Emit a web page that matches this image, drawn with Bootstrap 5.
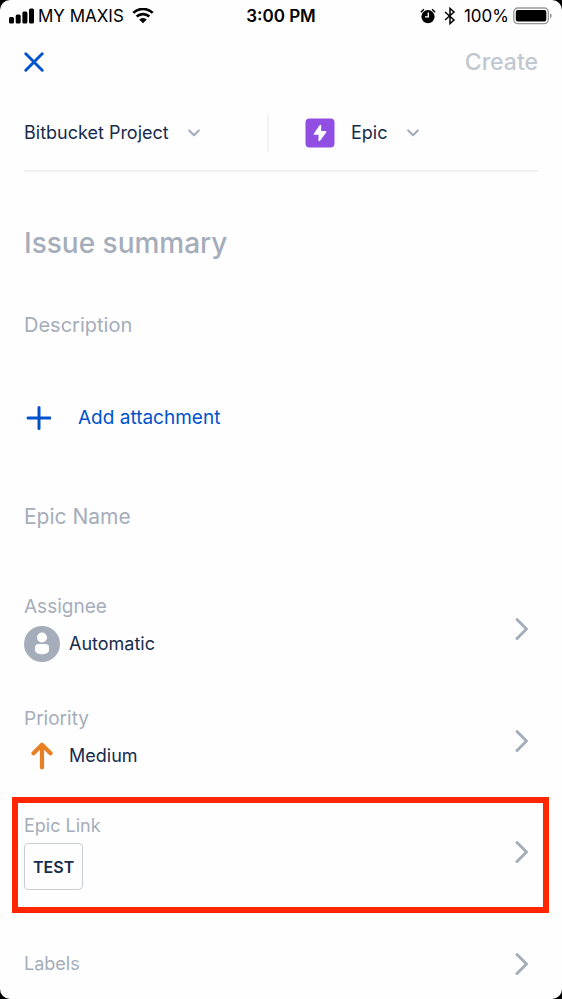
<!DOCTYPE html>
<html lang="en">
<head>
<meta charset="utf-8">
<meta name="viewport" content="width=device-width, initial-scale=1">
<title>Create issue</title>
<link href="https://cdn.jsdelivr.net/npm/bootstrap@5.3.0/dist/css/bootstrap.min.css" rel="stylesheet">
<style>
  :root { --ink: #172b4d; --muted-ink: #a5adba; --brand: #0052cc; --hairline: #f1f2f4; }
  body { background: #000; color: var(--ink); font-family: Inter, "Liberation Sans", sans-serif; font-size: 18px; line-height: 24px; }
  svg { display: block; flex: none; }
  .screen { background: #fefefe; border-radius: 10px; overflow: hidden; }
  .status-bar { height: 31px; padding: 0 9px; color: #000; font-size: 17px; }
  .side { flex: 1 1 0; }
  .clock { font-weight: 600; }
  .gutter { padding-left: 24px; padding-right: 24px; }
  .title-bar { height: 62px; }
  .plain { border: 0; background: none; padding: 0; color: inherit; text-align: left; }
  .create-btn { font-size: 23px; font-weight: 500; color: #c1c7d0; }
  .pickers { height: 79px; padding-top: 3px; border-bottom: 2px solid var(--hairline); }
  .project { flex: 0 0 245px; height: 38px; border-right: 2px solid var(--hairline); }
  .kind { padding-left: 36px; }
  .picker { appearance: none; }
  .picker-gap { margin-left: 18px; }
  .field { display: block; width: 100%; border: 0; background: none; padding: 0; color: var(--ink); font-size: 20px; resize: none; outline-offset: 4px; }
  .field::placeholder { color: var(--muted-ink); opacity: 1; }
  .field-summary { height: 36px; font-size: 28px; font-weight: 500; }
  .field-line { height: 28px; line-height: 28px; }
  .fields { padding-top: 53px; }
  .after-summary { margin-top: 50px; }
  .after-description { margin-top: 67px; }
  .attach { color: var(--brand); gap: 27px; height: 24px; font-size: 19px; }
  .after-attach { margin-top: 73px; font-size: 21px; }
  .rows { padding-top: 42px; }
  .row-btn { width: 100%; padding: 22px 33px 23px 24px; }
  .caption-text { color: var(--muted-ink); }
  .caption-large { font-size: 19px; }
  .value { margin-top: 7px; gap: 9px; height: 36px; }
  .marked { margin: 0 13px 0 12px; border: 6px solid #ff2600; }
  .marked .row-btn { padding: 11px 14px 17px 6px; }
  .chip { margin-top: 5px; height: 47px; padding: 0 8px; border: 1px solid #c8cdd5; border-radius: 4px; font-size: 16px; font-weight: 600; }
  .row-last { padding-top: 39px; }
</style>
<script src="https://cdn.jsdelivr.net/npm/bootstrap@5.3.0/dist/js/bootstrap.bundle.min.js"></script>
</head>
<body>
<svg class="d-none" aria-hidden="true">
  <symbol id="next" viewBox="0 0 14 24"><path d="M2 2.500 11.500 12 2 21.500" fill="none" stroke="#a5adba" stroke-width="2.900" stroke-linecap="round" stroke-linejoin="round"/></symbol>
  <symbol id="down" viewBox="0 0 14 10"><path d="M2.200 2.500 7 7.300l4.800-4.800" fill="none" stroke="#a5adba" stroke-width="2.200" stroke-linecap="round" stroke-linejoin="round"/></symbol>
</svg>
<div class="screen min-vh-100">
  <div class="status-bar d-flex align-items-center">
    <div class="side d-flex align-items-center">
      <svg width="25" height="16" viewBox="0 0 25 16" aria-hidden="true"><rect y="9" width="5" height="6.500" rx="1.500"/><rect x="6.700" y="6.500" width="5" height="9" rx="1.500"/><rect x="13.400" y="3.500" width="5" height="12" rx="1.500"/><rect x="20" y="0.500" width="5" height="15" rx="1.500"/></svg>
      <span class="ms-1 text-nowrap">MY MAXIS</span>
      <svg class="ms-2" width="22" height="16" viewBox="0 0 22 16" aria-hidden="true"><path d="M1.300 4.900a14 14 0 0 1 19.400 0M4.700 8.600a9.200 9.200 0 0 1 12.600 0" fill="none" stroke="#000" stroke-width="2.700"/><path d="M7.200 11.600a5.500 5.500 0 0 1 7.600 0L11 15.300z"/></svg>
    </div>
    <span class="clock">3:00 PM</span>
    <div class="side d-flex align-items-center justify-content-end">
      <svg width="16" height="16" viewBox="0 0 16 16" aria-hidden="true"><circle cx="8" cy="8.600" r="6.600"/><path d="M.9 4.200 3.900 1.200M15.100 4.200 12.100 1.200" stroke="#000" stroke-width="1.500"/><path d="M8.300 4.600v4.300H5" fill="none" stroke="#fff" stroke-width="1.400"/></svg>
      <svg class="ms-2" width="12" height="18" viewBox="0 0 12 18" aria-hidden="true"><path d="M1 5 10 13 6 16.600V1.400L10 5 1 13" fill="none" stroke="#000" stroke-width="1.500"/></svg>
      <span class="ms-2">100%</span>
      <svg class="ms-1" width="40" height="18" viewBox="0 0 40 18" aria-hidden="true"><rect x=".8" y="1" width="34.500" height="15.600" rx="4" fill="none" stroke="#999" stroke-width="1.300"/><rect x="2.800" y="3" width="30.500" height="11.600" rx="2"/><path d="M37 6.200c2.300.8 2.300 4.200 0 5z" fill="#999"/></svg>
    </div>
  </div>

  <header class="title-bar gutter d-flex align-items-center justify-content-between">
    <button type="button" class="plain" aria-label="Close"><svg width="20" height="20" viewBox="0 0 20 20"><path d="M1.800 1.800 18.200 18.200M18.200 1.800 1.800 18.200" stroke="#0052cc" stroke-width="2.900" stroke-linecap="round"/></svg></button>
    <button type="button" class="plain create-btn">Create</button>
  </header>

  <main>
    <div class="gutter">
      <div class="pickers d-flex align-items-center">
        <div class="project d-flex align-items-center">
          <select class="plain picker" aria-label="Project"><option>Bitbucket Project</option></select>
          <svg class="picker-gap" width="14" height="10" aria-hidden="true"><use href="#down"/></svg>
        </div>
        <div class="kind d-flex align-items-center">
          <svg width="30" height="30" viewBox="0 0 30 30" aria-hidden="true"><rect x=".5" y=".5" width="29" height="29" rx="4" fill="#904ee2"/><path d="M14.600 7.300 8.900 15.400c-.5.800-.2 1.300.6 1.300h4v5.800c0 1 .9 1.100 1.400.4l6.200-8.500c.5-.8.2-1.300-.6-1.300h-4.300V7.700c0-1-.9-1.200-1.600-.4z" fill="#fff"/></svg>
          <select class="plain picker ms-3" aria-label="Issue type"><option>Epic</option></select>
          <svg class="picker-gap" width="14" height="10" aria-hidden="true"><use href="#down"/></svg>
        </div>
      </div>

      <div class="fields">
        <input class="field field-summary" type="text" aria-label="Issue summary" placeholder="Issue summary">
        <textarea class="field field-line after-summary" rows="1" aria-label="Description" placeholder="Description"></textarea>
        <button type="button" class="plain attach after-description d-flex align-items-center">
          <svg width="27" height="24" viewBox="0 0 27 24" aria-hidden="true"><path d="M4 12h22M15 1.500v21" stroke="#0052cc" stroke-width="3" stroke-linecap="round"/></svg>
          Add attachment
        </button>
        <input class="field field-line after-attach" type="text" aria-label="Epic Name" placeholder="Epic Name">
      </div>
    </div>

    <div class="rows">
      <button type="button" class="plain row-btn d-flex align-items-center justify-content-between">
        <span class="d-block">
          <span class="caption-text caption-large d-block">Assignee</span>
          <span class="value d-flex align-items-center">
            <svg width="36" height="36" viewBox="0 0 36 36" aria-hidden="true"><circle cx="18" cy="18" r="18" fill="#a5adba"/><circle cx="18" cy="11.500" r="5" fill="#fff"/><path d="M11 21.500a3.500 3.500 0 0 1 3.500-3.500h7a3.500 3.500 0 0 1 3.500 3.500v2.500c0 2.800-3 4.200-7 4.200s-7-1.400-7-4.200z" fill="#fff"/></svg>
            Automatic
          </span>
        </span>
        <svg width="14" height="24" aria-hidden="true"><use href="#next"/></svg>
      </button>
      <button type="button" class="plain row-btn d-flex align-items-center justify-content-between">
        <span class="d-block">
          <span class="caption-text caption-large d-block">Priority</span>
          <span class="value d-flex align-items-center">
            <svg width="36" height="36" viewBox="0 0 36 36" aria-hidden="true"><path d="M18 29.500V7M9.500 15.200 18 6.700l8.500 8.500" fill="none" stroke="#e97f23" stroke-width="4.200" stroke-linecap="round" stroke-linejoin="round"/></svg>
            Medium
          </span>
        </span>
        <svg width="14" height="24" aria-hidden="true"><use href="#next"/></svg>
      </button>
      <div class="marked">
        <button type="button" class="plain row-btn d-flex align-items-center justify-content-between">
          <span class="d-block">
            <span class="caption-text d-block">Epic Link</span>
            <span class="chip d-inline-flex align-items-center">TEST</span>
          </span>
          <svg width="14" height="24" aria-hidden="true"><use href="#next"/></svg>
        </button>
      </div>
      <button type="button" class="plain row-btn row-last d-flex align-items-center justify-content-between">
        <span class="caption-text">Labels</span>
        <svg width="14" height="24" aria-hidden="true"><use href="#next"/></svg>
      </button>
    </div>
  </main>
</div>
</body>
</html>
